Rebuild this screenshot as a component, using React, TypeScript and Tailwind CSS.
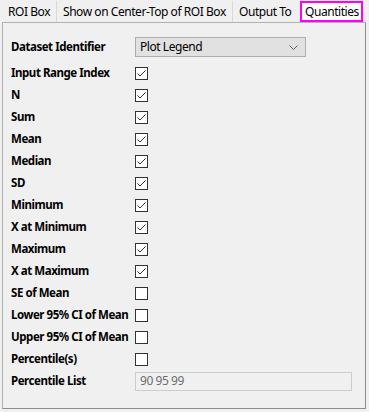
import React from "react";

const rows: { label: string; checked: boolean }[] = [
  { label: "Input Range Index", checked: true },
  { label: "N", checked: true },
  { label: "Sum", checked: true },
  { label: "Mean", checked: true },
  { label: "Median", checked: true },
  { label: "SD", checked: true },
  { label: "Minimum", checked: true },
  { label: "X at Minimum", checked: true },
  { label: "Maximum", checked: true },
  { label: "X at Maximum", checked: true },
  { label: "SE of Mean", checked: false },
  { label: "Lower 95% CI of Mean", checked: false },
  { label: "Upper 95% CI of Mean", checked: false },
  { label: "Percentile(s)", checked: false },
];

function Check({ checked }: { checked: boolean }) {
  return (
    <div className="w-[13px] h-[13px] border border-[#333333] bg-white flex items-center justify-center">
      {checked && (
        <svg width="11" height="11" viewBox="0 0 11 11">
          <path d="M1.5 5.5 L4 8 L9.5 2.5" fill="none" stroke="#333333" strokeWidth="1" />
        </svg>
      )}
    </div>
  );
}

export default function App() {
  return (
    <div
      className="w-[369px] h-[412px] bg-[#f0f0f0] text-black text-[11.5px] tracking-[-0.45px] overflow-hidden"
      style={{ fontFamily: '"Noto Sans", "Open Sans", sans-serif' }}
    >
      <div className="flex h-[22px] pl-[1px] pt-[1px] items-stretch whitespace-nowrap text-[12px] tracking-[-0.45px]">
        <div className="w-[56px] border-r border-[#d9d9d9] pl-[7px] flex items-center">ROI Box</div>
        <div className="w-[176px] border-r border-[#d9d9d9] pl-[6px] flex items-center">Show on Center-Top of ROI Box</div>
        <div className="w-[67px] pl-[6px] flex items-center">Output To</div>
        <div className="w-[63px] border-2 border-[#ff00ff] bg-white pl-[3px] flex items-center">Quantities</div>
      </div>
      <div className="ml-[2px] w-[364px] h-[387px] border border-[#8c8c8c] border-t-[#b0b0b0] border-l-[#b0b0b0] pl-[8px] pt-[14px]">
        <div className="flex items-center h-[20px]">
          <div className="w-[124px] font-bold">Dataset Identifier</div>
          <div className="w-[171px] h-[20px] border border-[#adadad] bg-[#e1e1e1] flex items-center justify-between pl-[4px] pr-[7px] text-[12px]">
            <span>Plot Legend</span>
            <svg width="9" height="5" viewBox="0 0 9 5">
              <path d="M0.5 0.5 L4.5 4.5 L8.5 0.5" fill="none" stroke="#606060" strokeWidth="1" />
            </svg>
          </div>
        </div>
        <div className="mt-[5px] flex flex-col">
          {rows.map((r) => (
            <div key={r.label} className="flex items-center h-[22px]">
              <div className="w-[124px] font-bold whitespace-nowrap">{r.label}</div>
              <Check checked={r.checked} />
            </div>
          ))}
          <div className="flex items-center h-[22px]">
            <div className="w-[124px] font-bold">Percentile List</div>
            <div className="w-[217px] h-[19px] border border-[#cccccc] bg-[#f0f0f0] pl-[4px] flex items-center text-[#6d6d6d] text-[12px]">
              90 95 99
            </div>
          </div>
        </div>
      </div>
    </div>
  );
}
